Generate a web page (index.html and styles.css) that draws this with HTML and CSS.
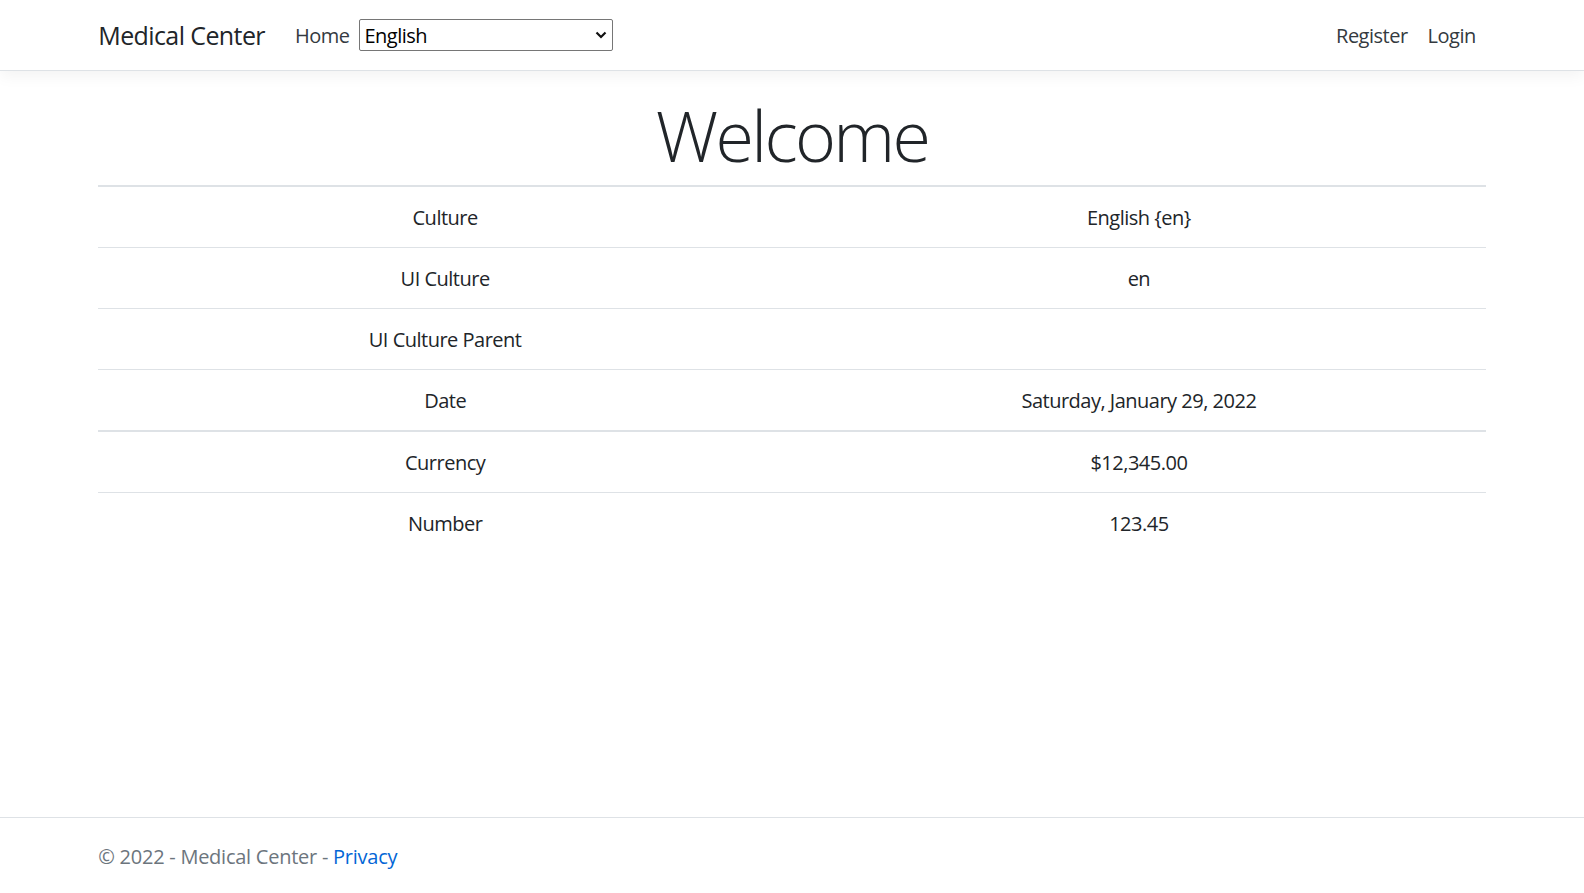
FILE: index.html
```html
<!DOCTYPE html>
<html lang="en">
<head>
<meta charset="utf-8">
<title>Home Page - Medical Center</title>
<link rel="stylesheet" href="styles.css">
</head>
<body>
<div class="page">
  <header class="navbar">
    <div class="container nav-inner">
      <a class="brand" href="#">Medical Center</a>
      <ul class="nav-left">
        <li><a class="nav-link" href="#">Home</a></li>
        <li class="lang">
          <select class="lang-select">
            <option>English</option>
          </select>
          <svg class="chev" width="12" height="8" viewBox="0 0 12 8"><path d="M1.5 1.5 L6 6 L10.5 1.5" fill="none" stroke="#111" stroke-width="2.2"/></svg>
        </li>
      </ul>
      <ul class="nav-right">
        <li><a class="nav-link" href="#">Register</a></li>
        <li><a class="nav-link" href="#">Login</a></li>
      </ul>
    </div>
  </header>

  <main class="container main">
    <h1 class="display">Welcome</h1>
    <table class="table">
      <tbody class="first">
        <tr><td>Culture</td><td>English {en}</td></tr>
        <tr><td>UI Culture</td><td>en</td></tr>
        <tr><td>UI Culture Parent</td><td></td></tr>
        <tr><td>Date</td><td>Saturday, January 29, 2022</td></tr>
      </tbody>
      <tbody class="second">
        <tr><td>Currency</td><td>$12,345.00</td></tr>
        <tr><td>Number</td><td>123.45</td></tr>
      </tbody>
    </table>
  </main>

  <footer class="footer">
    <div class="container">&copy; 2022 - Medical Center - <a href="#">Privacy</a></div>
  </footer>
</div>
</body>
</html>
```

FILE: styles.css
```css
* { box-sizing: border-box; }
html, body { margin: 0; padding: 0; }
body {
  font-family: "Open Sans", "Noto Sans", "Liberation Sans", sans-serif;
  font-size: 20px;
  line-height: 1.5;
  letter-spacing: -0.5px;
  color: #212529;
  background: #fff;
}
a { color: #0366d6; text-decoration: none; }
.page {
  min-height: 100vh;
  display: flex;
  flex-direction: column;
}
.container {
  width: 1425px;
  margin: 0 auto;
  padding: 0 18.75px;
}
.navbar {
  padding: 10px 0;
  border-bottom: 1px solid #dee2e6;
  box-shadow: 0 5px 15px rgba(0,0,0,.05);
  background: #fff;
  position: relative;
  z-index: 1;
}
.nav-inner {
  display: flex;
  align-items: center;
}
.brand {
  font-size: 25px;
  line-height: 37.5px;
  padding: 7.25px 0 5.25px;
  margin-right: 20px;
  letter-spacing: -0.6px;
  color: #212529;
}
.nav-left, .nav-right {
  list-style: none;
  margin: 0;
  padding: 0;
  display: flex;
  align-items: center;
}
.nav-left { flex: 1; }
.nav-link {
  display: block;
  padding: 11px 10px 9px;
  color: #343a40;
}
.lang { position: relative; }
.lang-select {
  appearance: none;
  -webkit-appearance: none;
  display: block;
  width: 254px;
  height: 32px;
  font-family: inherit;
  font-size: 20px;
  letter-spacing: -0.5px;
  color: #000;
  background: #fff;
  border: 1px solid #767676;
  border-radius: 2px;
  padding: 1px 4px 0;
  line-height: 28px;
}
.chev {
  position: absolute;
  right: 6px;
  top: 12px;
  pointer-events: none;
}
.main {
  margin-top: 20px;
  padding-bottom: 20px;
}
.display {
  font-size: 70px;
  font-weight: 300;
  line-height: 84px;
  padding-top: 2px;
  height: 84px;
  letter-spacing: -2.7px;
  margin: 0 0 10px;
  text-align: center;
}
.table {
  width: 100%;
  border-collapse: collapse;
  text-align: center;
}
.table td {
  width: 50%;
  padding: 16px 15px 14px;
  line-height: 30px;
  height: 61px;
  border-top: 1px solid #dee2e6;
  vertical-align: top;
}
.table tbody.first tr:first-child td,
.table tbody.second tr:first-child td {
  border-top: 2px solid #dee2e6;
}
.footer {
  margin-top: auto;
  border-top: 1px solid #dee2e6;
  color: #6c757d;
  line-height: 75px;
  padding-top: 1px;
  height: 76px;
  letter-spacing: -0.25px;
  white-space: nowrap;
}
```
